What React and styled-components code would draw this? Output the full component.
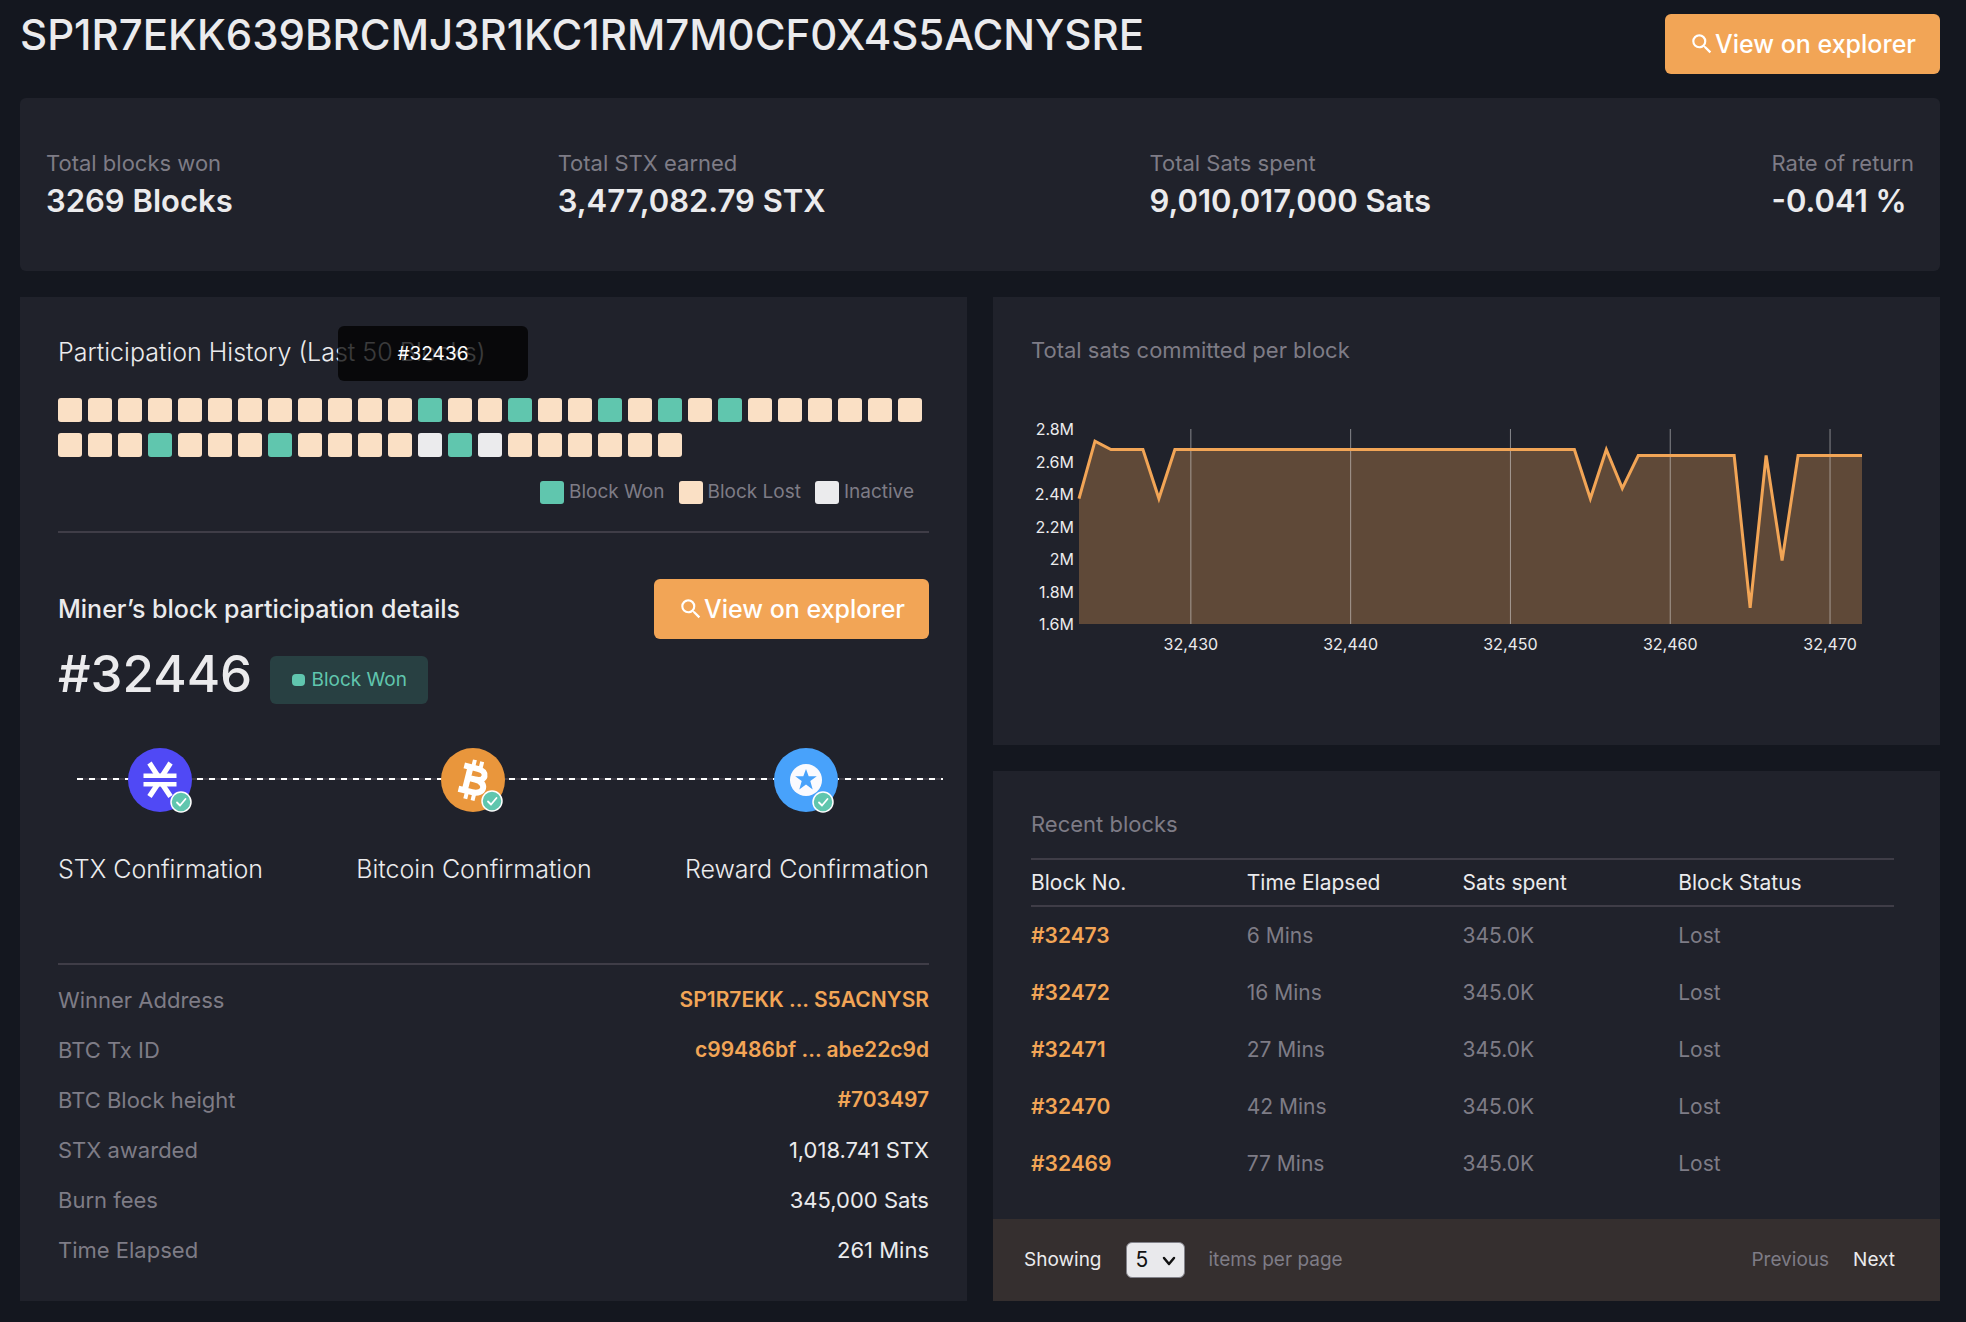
import React from "react";
import styled, { createGlobalStyle } from "styled-components";
import { MdSearch } from "react-icons/md";

const c = {
  page: "#14171f",
  card: "#20222b",
  line: "#3f3d47",
  text: "#ebebed",
  muted: "#7e7c86",
  orange: "#f2a556",
  green: "#60c6ae",
  cream: "#fae0c5",
  white: "#ebebed",
};

const Global = createGlobalStyle`
  *, *::before, *::after { box-sizing: border-box; }
  body {
    margin: 0;
    background: ${c.page};
    color: ${c.text};
    font-family: Inter, "Liberation Sans", sans-serif;
    font-size: 21px;
    line-height: 30px;
  }
  h1, h2, p, ul, dl, dd { margin: 0; padding: 0; }
  button, select { font: inherit; }
`;

const Page = styled.main`
  min-height: 100vh;
  padding: 14px 26px 20px 20px;
`;

const Header = styled.header`
  display: flex;
  justify-content: space-between;
  align-items: flex-start;
  gap: 24px;
  margin-bottom: 24px;
`;

const Address = styled.h1`
  font-size: 42px;
  line-height: 42px;
  font-weight: 500;
`;

const ExplorerButton = styled.button`
  display: flex;
  align-items: center;
  justify-content: center;
  flex: none;
  width: 275px;
  height: 60px;
  border: 0;
  border-radius: 6px;
  background: ${c.orange};
  color: #fff;
  font-size: 25px;
  font-weight: 500;
  cursor: pointer;
`;

const Stats = styled.dl`
  display: grid;
  grid-template-columns: 51fr 59fr 62fr auto;
  padding: 50px 26px 48px;
  margin-bottom: 26px;
  background: ${c.card};
  border-radius: 6px;
`;

const StatLabel = styled.dt`
  color: ${c.muted};
  font-size: 22px;
  line-height: 31px;
`;

const StatValue = styled.dd`
  font-size: 31px;
  line-height: 44px;
  font-weight: 600;
`;

const Columns = styled.div`
  display: grid;
  grid-template-columns: 1fr 1fr;
  gap: 26px;
`;

const Stack = styled.div`
  display: flex;
  flex-direction: column;
  gap: 26px;
`;

const Card = styled.section`
  background: ${c.card};
  padding: ${(p) => p.$pad};
`;

const LightTitle = styled.h2`
  font-size: 25px;
  line-height: 34px;
  font-weight: 300;
`;

const MutedTitle = styled.h2`
  font-size: 22px;
  line-height: 30px;
  font-weight: 400;
  color: ${c.muted};
`;

const Blocks = styled.ul`
  display: flex;
  flex-wrap: wrap;
  gap: 11px 6px;
  margin-top: 29px;
  list-style: none;
`;

const Square = styled.li`
  position: relative;
  width: 24px;
  height: 24px;
  border-radius: 3px;
  background: ${(p) => c[p.$tone]};
`;

const Tooltip = styled.div`
  position: absolute;
  right: -86px;
  bottom: 41px;
  width: 190px;
  height: 55px;
  display: flex;
  align-items: center;
  justify-content: center;
  border-radius: 6px;
  background: rgba(0, 0, 0, 0.75);
  color: #fff;
  font-size: 19px;
`;

const Legend = styled.ul`
  display: flex;
  justify-content: flex-end;
  gap: 14px;
  margin: 20px 0 24px;
  padding-right: 15px;
  list-style: none;
`;

const LegendItem = styled.li`
  display: flex;
  align-items: center;
  gap: 5px;
  color: ${c.muted};
  font-size: 19px;
`;

const Swatch = styled.span`
  width: 24px;
  height: 23px;
  border-radius: 3px;
  background: ${(p) => c[p.$tone]};
`;

const Rule = styled.hr`
  height: 2px;
  margin: 0;
  border: 0;
  background: ${c.line};
`;

const DetailHead = styled.div`
  display: flex;
  justify-content: space-between;
  align-items: center;
  margin-top: 46px;
`;

const DetailTitle = styled.h2`
  font-size: 25px;
  line-height: 34px;
  font-weight: 500;
`;

const BlockLine = styled.div`
  display: flex;
  align-items: center;
  gap: 18px;
  margin-top: 4px;
`;

const BlockNumber = styled.p`
  font-size: 51px;
  line-height: 61px;
  font-weight: 500;
`;

const Badge = styled.span`
  display: flex;
  align-items: center;
  justify-content: center;
  gap: 7px;
  width: 158px;
  height: 48px;
  margin-top: 13px;
  border-radius: 6px;
  background: #284042;
  color: ${c.green};
  font-size: 19px;
  font-weight: 400;
`;

const Dot = styled.span`
  width: 13px;
  height: 12px;
  border-radius: 4px;
  background: ${c.green};
`;

const Steps = styled.ul`
  position: relative;
  display: flex;
  justify-content: space-between;
  margin-top: 44px;
  padding-bottom: 77px;
  list-style: none;

  &::before {
    content: "";
    position: absolute;
    left: 19px;
    right: -14px;
    top: 30px;
    height: 2px;
    background: repeating-linear-gradient(90deg, #fff 0 6px, ${c.line} 6px 12px);
  }
`;

const Step = styled.li`
  position: relative;
  display: flex;
  flex-direction: column;
  align-items: center;
  gap: 36px;
  font-size: 25px;
  line-height: 34px;
  font-weight: 300;

  svg { display: block; }
`;

const Facts = styled.dl`
  padding-top: 10px;
`;

const Fact = styled.div`
  display: flex;
  justify-content: space-between;
  line-height: 50px;
  font-size: 22px;

  dt { color: ${c.muted}; }
`;

const Value = styled.dd`
  font-size: ${(p) => (p.$link ? "21px" : "22px")};
`;

const Link = styled.a`
  color: ${c.orange};
  font-weight: 600;
  text-decoration: none;
`;

const Chart = styled.svg`
  display: block;
  width: 100%;
  height: auto;
  margin-top: 43px;
  font-size: 16px;
`;

const TableCard = styled(Card)`
  display: flex;
  flex-direction: column;
  flex: 1;
`;

const TableArea = styled.div`
  flex: 1;
  padding: 38px 46px 27px 38px;
`;

const Table = styled.table`
  width: 100%;
  margin-top: 19px;
  table-layout: fixed;
  border-collapse: separate;
  border-spacing: 0;
`;

const Th = styled.th`
  height: 49px;
  padding: 0;
  border-top: 2px solid ${c.line};
  border-bottom: 2px solid ${c.line};
  font-size: 21px;
  font-weight: 400;
  text-align: left;
`;

const Td = styled.td`
  height: 57px;
  padding: 0;
  color: ${c.muted};
  font-size: 21px;
`;

const Pager = styled.footer`
  display: flex;
  align-items: center;
  gap: 24px;
  height: 82px;
  padding: 0 45px 0 31px;
  background: #352f2f;
  font-size: 19px;
`;

const PageSize = styled.label`
  display: flex;
  align-items: center;
  gap: 24px;
`;

const SelectWrap = styled.span`
  position: relative;
  display: flex;

  svg {
    position: absolute;
    right: 9px;
    top: 14px;
    pointer-events: none;
  }
`;

const Select = styled.select`
  appearance: none;
  width: 59px;
  height: 36px;
  padding: 0 0 0 9px;
  border: 1px solid #82828a;
  border-radius: 6px;
  background: #e9e9ec;
  color: #111;
  font-size: 21px;
`;

const Muted = styled.span`
  flex: 1;
  color: ${c.muted};
`;

const PageButton = styled.button`
  padding: 0;
  border: 0;
  background: none;
  color: ${c.text};

  &:disabled { color: ${c.muted}; }
`;

const won = [12, 15, 18, 20, 22, 32, 36, 42];
const idle = [41, 43];
const blocks = Array.from({ length: 50 }, (_, i) => ({
  number: 32424 + i,
  tone: won.includes(i) ? "green" : idle.includes(i) ? "white" : "cream",
}));

const sats = [2.372, 2.725, 2.674, 2.674, 2.674, 2.372]
  .concat(Array(26).fill(2.674))
  .concat([2.372, 2.674, 2.435])
  .concat(Array(7).fill(2.637))
  .concat([1.7, 2.637, 1.99])
  .concat(Array(5).fill(2.637));

function SatsChart() {
  const left = 48;
  const right = 831;
  const top = 21;
  const bottom = 216;
  const x = (i) => left + (i * (right - left)) / (sats.length - 1);
  const y = (v) => top + ((2.8 - v) / 1.2) * (bottom - top);
  const line = sats.map((v, i) => `${x(i)},${y(v)}`).join(" ");
  return (
    <Chart viewBox="0 0 863 262" role="img" aria-label="Total sats committed per block">
      <polygon points={`${left},${bottom} ${line} ${right},${bottom}`} fill={c.orange} fillOpacity="0.3" />
      {[32430, 32440, 32450, 32460, 32470].map((n) => (
        <g key={n}>
          <line x1={x(n - 32423)} x2={x(n - 32423)} y1={top} y2={bottom} stroke="#ebebed" strokeOpacity="0.5" />
          <text x={x(n - 32423)} y="242" textAnchor="middle" fill={c.text}>{n.toLocaleString("en-US")}</text>
        </g>
      ))}
      <polyline points={line} fill="none" stroke={c.orange} strokeWidth="3" />
      {["2.8M", "2.6M", "2.4M", "2.2M", "2M", "1.8M", "1.6M"].map((t, i) => (
        <text key={t} x="43" y={top + (i * (bottom - top)) / 6 + 6} textAnchor="end" fill={c.text}>{t}</text>
      ))}
    </Chart>
  );
}

const Check = ({ x, y }) => (
  <g transform={`translate(${x} ${y})`}>
    <circle r="10" fill={c.green} stroke="#fff" strokeWidth="1.5" />
    <path d="M-4 0.5 L-1 3.5 L4.5 -3" fill="none" stroke="#fff" strokeWidth="1.8" strokeLinecap="round" strokeLinejoin="round" />
  </g>
);

const StacksIcon = () => (
  <svg width="68" height="68" viewBox="-33 -32 68 68" aria-hidden="true">
    <circle r="32" fill="#5049f5" />
    <g stroke="#fff" fill="none">
      <path d="M-16.5 -4.2 H16.5 M-16.5 4.2 H16.5" strokeWidth="4.4" />
      <path d="M-10.5 -17 L-2.5 -4.5 M10.5 -17 L2.5 -4.5 M-10.5 16.5 L-2.5 4.5 M10.5 16.5 L2.5 4.5" strokeWidth="5.2" />
    </g>
    <Check x="21" y="22" />
  </svg>
);

const BitcoinIcon = () => (
  <svg width="68" height="68" viewBox="-33 -32 68 68" aria-hidden="true">
    <circle r="32" fill="#e9963c" />
    <g transform="rotate(14)" fill="none" stroke="#fff" strokeWidth="6">
      <path d="M-12 -12 H2 C13 -12 13 -1 2 -1 H-4 M2 -1 C15 -1 15 12 2 12 H-12 M-5.5 -12 V12" />
      <path d="M-3 -20 V-12 M4.5 -20 V-12 M-3 12 V20 M4.5 12 V20" strokeWidth="4" />
    </g>
    <Check x="19" y="21" />
  </svg>
);

const RewardIcon = () => (
  <svg width="68" height="68" viewBox="-33 -32 68 68" aria-hidden="true">
    <circle r="32" fill="#48a2fb" />
    <circle r="16" fill="#fafafe" />
    <path
      d="M0 -11 L2.7 -3.7 H10.8 L4.3 1 L6.7 9.5 L0 4.6 L-6.7 9.5 L-4.3 1 L-10.8 -3.7 H-2.7 Z"
      fill="#48a2fb"
    />
    <Check x="17" y="22" />
  </svg>
);

const Explorer = () => (
  <ExplorerButton type="button">
    <MdSearch size={26} aria-hidden="true" />
    View on explorer
  </ExplorerButton>
);

const stats = [
  ["Total blocks won", "3269 Blocks"],
  ["Total STX earned", "3,477,082.79 STX"],
  ["Total Sats spent", "9,010,017,000 Sats"],
  ["Rate of return", "-0.041 %"],
];

const facts = [
  ["Winner Address", "SP1R7EKK ... S5ACNYSR", true],
  ["BTC Tx ID", "c99486bf ... abe22c9d", true],
  ["BTC Block height", "#703497", true],
  ["STX awarded", "1,018.741 STX"],
  ["Burn fees", "345,000 Sats"],
  ["Time Elapsed", "261 Mins"],
];

const rows = [
  ["#32473", "6 Mins"],
  ["#32472", "16 Mins"],
  ["#32471", "27 Mins"],
  ["#32470", "42 Mins"],
  ["#32469", "77 Mins"],
];

export default function App() {
  return (
    <Page>
      <Global />
      <Header>
        <Address>SP1R7EKK639BRCMJ3R1KC1RM7M0CF0X4S5ACNYSRE</Address>
        <Explorer />
      </Header>
      <Stats>
        {stats.map(([label, value]) => (
          <div key={label}>
            <StatLabel>{label}</StatLabel>
            <StatValue>{value}</StatValue>
          </div>
        ))}
      </Stats>
      <Columns>
        <Card $pad="38px 38px 26px">
          <LightTitle>Participation History (Last 50 Blocks)</LightTitle>
          <Blocks>
            {blocks.map((b) => (
              <Square key={b.number} $tone={b.tone}>
                {b.number === 32436 && <Tooltip role="tooltip">#32436</Tooltip>}
              </Square>
            ))}
          </Blocks>
          <Legend>
            <LegendItem><Swatch $tone="green" />Block Won</LegendItem>
            <LegendItem><Swatch $tone="cream" />Block Lost</LegendItem>
            <LegendItem><Swatch $tone="white" />Inactive</LegendItem>
          </Legend>
          <Rule />
          <DetailHead>
            <DetailTitle>Miner’s block participation details</DetailTitle>
            <Explorer />
          </DetailHead>
          <BlockLine>
            <BlockNumber>#32446</BlockNumber>
            <Badge><Dot />Block Won</Badge>
          </BlockLine>
          <Steps>
            <Step><StacksIcon />STX Confirmation</Step>
            <Step><BitcoinIcon />Bitcoin Confirmation</Step>
            <Step><RewardIcon />Reward Confirmation</Step>
          </Steps>
          <Rule />
          <Facts>
            {facts.map(([label, value, link]) => (
              <Fact key={label}>
                <dt>{label}</dt>
                <Value $link={link}>{link ? <Link href="#">{value}</Link> : value}</Value>
              </Fact>
            ))}
          </Facts>
        </Card>
        <Stack>
          <Card $pad="38px 46px 75px 38px">
            <MutedTitle>Total sats committed per block</MutedTitle>
            <SatsChart />
          </Card>
          <TableCard $pad="0">
            <TableArea>
              <MutedTitle>Recent blocks</MutedTitle>
              <Table>
                <thead>
                  <tr>
                    <Th>Block No.</Th>
                    <Th>Time Elapsed</Th>
                    <Th>Sats spent</Th>
                    <Th>Block Status</Th>
                  </tr>
                </thead>
                <tbody>
                  {rows.map(([number, time]) => (
                    <tr key={number}>
                      <Td><Link href="#">{number}</Link></Td>
                      <Td>{time}</Td>
                      <Td>345.0K</Td>
                      <Td>Lost</Td>
                    </tr>
                  ))}
                </tbody>
              </Table>
            </TableArea>
            <Pager>
              <PageSize>
                Showing
                <SelectWrap>
                  <Select defaultValue="5">
                    <option>5</option>
                    <option>10</option>
                    <option>20</option>
                  </Select>
                  <svg width="14" height="10" viewBox="0 0 14 10" aria-hidden="true">
                    <path d="M2 2 L7 8 L12 2" fill="none" stroke="#111" strokeWidth="2.5" strokeLinecap="round" strokeLinejoin="round" />
                  </svg>
                </SelectWrap>
              </PageSize>
              <Muted>items per page</Muted>
              <PageButton type="button" disabled>Previous</PageButton>
              <PageButton type="button">Next</PageButton>
            </Pager>
          </TableCard>
        </Stack>
      </Columns>
    </Page>
  );
}
